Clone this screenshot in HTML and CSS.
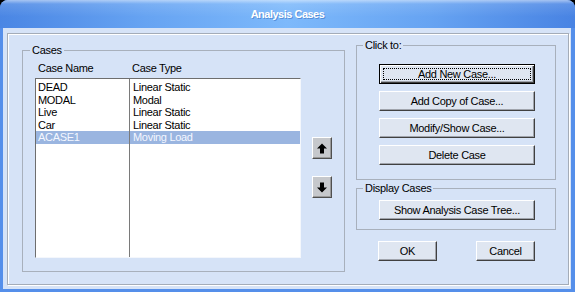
FILE: index.html
```html
<!DOCTYPE html>
<html lang="en">
<head>
    <meta charset="UTF-8">
    <title>Analysis Cases</title>
    <link rel="stylesheet" href="styles.css">
</head>
<body>
    <div class="window">
        <div class="titlebar">Analysis Cases</div>

        <div class="client">
            <div class="panel">

                <fieldset class="group cases">
                    <legend>Cases</legend>
                    <div class="cases-body">
                        <div class="list-wrap">
                            <div class="list-head">
                                <span class="head-name">Case Name</span>
                                <span>Case Type</span>
                            </div>
                            <div class="list">
                                <div class="row"><span class="cell-name">DEAD</span><span class="cell-type">Linear Static</span></div>
                                <div class="row"><span class="cell-name">MODAL</span><span class="cell-type">Modal</span></div>
                                <div class="row"><span class="cell-name">Live</span><span class="cell-type">Linear Static</span></div>
                                <div class="row"><span class="cell-name">Car</span><span class="cell-type">Linear Static</span></div>
                                <div class="row selected"><span class="cell-name">ACASE1</span><span class="cell-type">Moving Load</span></div>
                            </div>
                        </div>

                        <div class="arrows">
                            <button class="arrow" title="Move up">
                                <svg width="10" height="11" viewBox="0 0 10 11"><polygon points="5,0.5 10,5.5 7,5.5 7,10.5 3,10.5 3,5.5 0,5.5" fill="#000"/></svg>
                            </button>
                            <button class="arrow" title="Move down">
                                <svg width="10" height="11" viewBox="0 0 10 11"><polygon points="3,0.5 7,0.5 7,5.5 10,5.5 5,10.5 0,5.5 3,5.5" fill="#000"/></svg>
                            </button>
                        </div>
                    </div>
                </fieldset>

                <div class="side">
                    <fieldset class="group click-to">
                        <legend>Click to:</legend>
                        <button class="btn default"><span class="focus">Add New Case...</span></button>
                        <button class="btn">Add Copy of Case...</button>
                        <button class="btn">Modify/Show Case...</button>
                        <button class="btn">Delete Case</button>
                    </fieldset>

                    <fieldset class="group display">
                        <legend>Display Cases</legend>
                        <button class="btn">Show Analysis Case Tree...</button>
                    </fieldset>

                    <div class="actions">
                        <button class="btn small">OK</button>
                        <button class="btn small">Cancel</button>
                    </div>
                </div>

            </div>
        </div>
    </div>
</body>
</html>
```

FILE: styles.css
```css
* {
    box-sizing: border-box;
}

body {
    margin: 0;
    background-color: #000;
    font-family: "Liberation Sans", Arial, sans-serif;
    font-size: 11px;
    color: #000;
}

.window {
    width: 575px;
    height: 292px;
    background-color: #558fea;
    border-radius: 8px 8px 0 0;
    overflow: hidden;
    display: flex;
    flex-direction: column;
}

.titlebar {
    height: 28px;
    flex: none;
    display: flex;
    align-items: center;
    justify-content: center;
    color: #fff;
    font-weight: bold;
    letter-spacing: -0.5px;
    text-shadow: 1px 1px 0 rgba(40, 90, 170, 0.45);
    background:
        linear-gradient(180deg, rgba(255, 255, 255, 0.5) 0, rgba(255, 255, 255, 0.12) 4px, rgba(255, 255, 255, 0) 60%),
        linear-gradient(90deg, #4a86e4 0%, #66a3f2 25%, #7db9fb 50%, #66a3f2 75%, #4883e3 100%);
}

.client {
    flex: 1;
    margin: 0 4px 3px 3px;
    padding: 5px 2px 4px 4px;
    background-color: #d6e3f7;
}

.panel {
    height: 100%;
    border: 1px solid #a4acb8;
    box-shadow: inset 1px 1px 0 #fff, 1px 1px 0 #fff;
    display: flex;
    align-items: flex-start;
    gap: 11px;
    padding: 0 11px 0 14px;
}

/* group boxes */
.group {
    margin: 0;
    min-width: 0;
    border: 1px solid #a8b0bc;
    padding: 0;
}

.group legend {
    padding: 0 2px;
    line-height: 12px;
    letter-spacing: -0.3px;
}

.cases {
    width: 323px;
    margin-top: 10px;
    padding: 6px 12px 13px 12px;
}

.cases legend {
    margin-left: -5px;
}

.cases-body {
    display: flex;
    gap: 11px;
}

.list-head {
    display: flex;
    height: 16px;
    line-height: 12px;
    padding-left: 3px;
    letter-spacing: -0.3px;
}

.head-name {
    width: 94px;
}

.list {
    width: 266px;
    height: 180px;
    padding-top: 2px;
    background:
        linear-gradient(90deg, transparent 93px, #7a7a7a 93px, #7a7a7a 94px, transparent 94px),
        #fff;
    border: 1px solid;
    border-color: #6e6e6e #f4f7fc #f4f7fc #6e6e6e;
    letter-spacing: -0.3px;
}

.row {
    display: flex;
    height: 12.5px;
    line-height: 12.5px;
}

.cell-name {
    width: 94px;
    padding-left: 2px;
    border-right: 1px solid #7a7a7a;
}

.cell-type {
    padding-left: 3px;
}

.row.selected {
    background-color: #9ab5e0;
    color: #f4f7ff;
}

.arrows {
    margin-top: 75px;
    display: flex;
    flex-direction: column;
    gap: 17px;
}

.arrow {
    width: 20px;
    height: 22px;
    padding: 0;
    display: flex;
    align-items: center;
    justify-content: center;
    background-color: #c6c8cc;
    border: 1px solid;
    border-color: #fff #505050 #505050 #fff;
    box-shadow: inset -1px -1px 0 #9a9a9a;
}

/* right column */
.side {
    width: 200px;
    margin-top: 5px;
    display: flex;
    flex-direction: column;
}

.side legend {
    margin-left: -16px;
}

.click-to {
    padding: 13px 19px 14px 22px;
    display: flex;
    flex-direction: column;
    gap: 7px;
}

.display {
    margin-top: 2px;
    padding: 6px 19px 9px 22px;
}

.actions {
    margin-top: 11px;
    padding-left: 22px;
    display: flex;
    gap: 39px;
}

.btn {
    width: 156px;
    height: 20px;
    padding: 0;
    font: inherit;
    letter-spacing: -0.3px;
    color: #000;
    background-color: #dfe6f1;
    border: 1px solid;
    border-color: #fff #404040 #404040 #fff;
    box-shadow: inset -1px -1px 0 #a0a4ac;
}

.btn.small {
    width: 59px;
}

.btn.default {
    border-color: #000;
    box-shadow: inset 1px 1px 0 #fff, inset -1px -1px 0 #404040, inset -2px -2px 0 #a0a4ac;
    padding: 3px;
}

.focus {
    display: block;
    height: 12px;
    line-height: 10px;
    border: 1px dotted #000;
}
```
